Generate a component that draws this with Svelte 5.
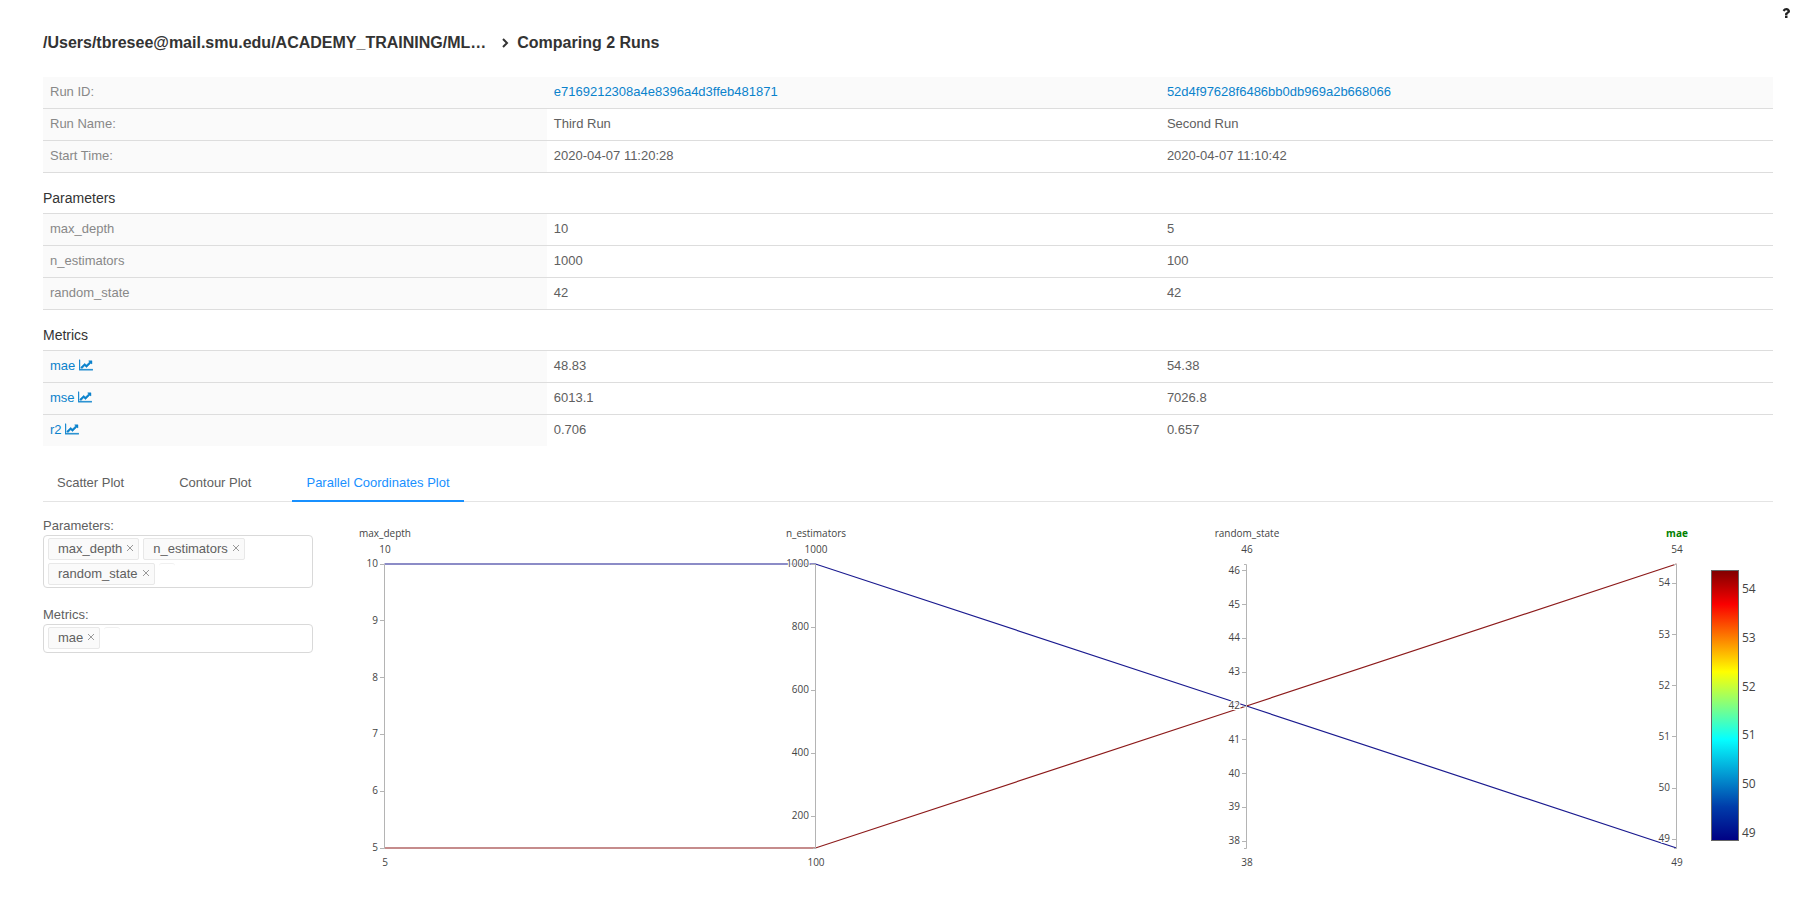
<script>
  const ids = ['e7169212308a4e8396a4d3ffeb481871', '52d4f97628f6486bb0db969a2b668066'];
  const info = [
    ['Run Name:', 'Third Run', 'Second Run'],
    ['Start Time:', '2020-04-07 11:20:28', '2020-04-07 11:10:42']
  ];
  const params = [
    ['max_depth', '10', '5'],
    ['n_estimators', '1000', '100'],
    ['random_state', '42', '42']
  ];
  const metrics = [
    ['mae', '48.83', '54.38'],
    ['mse', '6013.1', '7026.8'],
    ['r2', '0.706', '0.657']
  ];
  const tabs = ['Scatter Plot', 'Contour Plot', 'Parallel Coordinates Plot'];
  let active = $state(2);
  let selectedParams = $state(['max_depth', 'n_estimators', 'random_state']);
  let selectedMetrics = $state(['mae']);

  // Parallel coordinates geometry
  let width = $state(1445);
  const top = 48;
  const bottom = 332;
  const padLeft = 56;
  const padRight = 97;
  const axes = [
    { name: 'max_depth', min: 5, max: 10, hi: '10', lo: '5', ticks: [5, 6, 7, 8, 9, 10] },
    { name: 'n_estimators', min: 100, max: 1000, hi: '1000', lo: '100', ticks: [200, 400, 600, 800, 1000] },
    { name: 'random_state', min: 37.8, max: 46.2, hi: '46', lo: '38', ticks: [38, 39, 40, 41, 42, 43, 44, 45, 46] },
    { name: 'mae', min: 48.83, max: 54.38, hi: '54', lo: '49', ticks: [49, 50, 51, 52, 53, 54], metric: true }
  ];
  const runs = [
    { color: '#000083', values: [10, 1000, 42, 48.83] },
    { color: '#800000', values: [5, 100, 42, 54.38] }
  ];
  const barTop = 54;
  const barHeight = 270;
  const barTicks = [49, 50, 51, 52, 53, 54];
  const x = (i) => Math.ceil(padLeft + (i * (width - padLeft - padRight)) / 3);
  const y = (a, v) => bottom - ((v - a.min) / (a.max - a.min)) * (bottom - top);
  const snap = (n) => Math.floor(n) + 0.5;
  const barY = (v) => barTop + ((54.38 - v) / 5.55) * barHeight;
  const points = (r) => r.values.map((v, i) => `${x(i) + 0.5},${y(axes[i], v)}`).join(' ');
</script>

{#snippet chips(label, id, items, remove)}
  <div class="field">
    <label for={id}>{label}</label>
    <div class="select">
      {#each items as item}
        <span class="chip">{item}<button aria-label="Remove {item}" onclick={() => remove(item)}>
          <svg viewBox="0 0 8 8" width="8" height="8"><path d="M1 1l6 6M7 1l-6 6" /></svg>
        </button></span>
      {/each}
      <input {id} type="text" />
    </div>
  </div>
{/snippet}

{#snippet rows(list)}
  {#each list as [name, a, b]}
    <tr><th scope="row">{name}</th><td>{a}</td><td>{b}</td></tr>
  {/each}
{/snippet}

<div class="page">
  <header>
    <button class="help" aria-label="Help">
      <svg viewBox="0 0 1792 1792" width="14" height="14"><path d="M1088 1256v240q0 16-12 28t-28 12h-240q-16 0-28-12t-12-28v-240q0-16 12-28t28-12h240q16 0 28 12t12 28zm316-600q0 54-15.500 101t-35 76.500-55 59.500-57.500 43.500-61 35.500q-41 23-68.500 65t-27.500 67q0 17-12 32.500t-28 15.500h-240q-15 0-25.500-18.500t-10.500-37.500v-45q0-83 65-156.500t143-108.500q59-27 84-56t25-76q0-42-46.500-74t-107.500-32q-65 0-108 29-35 25-107 115-13 16-31 16-12 0-25-8l-164-125q-13-10-15.500-25t5.500-28q160-266 464-266 80 0 161 31t146 83 106 127.500 41 158.500z" /></svg>
    </button>
  </header>
  <main>
    <h1>
      <a href="#experiment">/Users/tbresee@mail.smu.edu/ACADEMY_TRAINING/ML…</a>
      <svg class="chevron" viewBox="0 0 8 12" width="8" height="12"><path d="M2 2l4 4-4 4" /></svg>
      <span>Comparing 2 Runs</span>
    </h1>

    <table>
      <thead>
        <tr>
          <th scope="row">Run ID:</th>
          {#each ids as id}<td><a href="#{id}">{id}</a></td>{/each}
        </tr>
      </thead>
      <tbody>{@render rows(info)}</tbody>
    </table>
    <h2>Parameters</h2>
    <table><tbody>{@render rows(params)}</tbody></table>
    <h2>Metrics</h2>
    <table>
      <tbody>
        {#each metrics as [name, a, b]}
          <tr>
            <th scope="row">
              <a class="metric" href="#{name}">{name}
                <svg viewBox="0 0 2048 1792" width="14" height="12"><path d="M2048 1536v128h-2048v-1536h128v1408h1920zm-128-1248v435q0 21-19.500 29.500t-35.500-7.500l-121-121-633 633q-10 10-23 10t-23-10l-233-233-416 416-192-192 585-585q10-10 23-10t23 10l233 233 464-464-121-121q-16-16-7.500-35.500t29.500-19.500h435q14 0 23 9t9 23z" /></svg>
              </a>
            </th>
            <td>{a}</td><td>{b}</td>
          </tr>
        {/each}
      </tbody>
    </table>

    <div class="tabs" role="tablist">
      {#each tabs as tab, i}
        <button role="tab" aria-selected={active === i} class:active={active === i} onclick={() => (active = i)}>{tab}</button>
      {/each}
    </div>

    <div class="panel">
      <div class="controls">
        {@render chips('Parameters:', 'params', selectedParams, (v) => (selectedParams = selectedParams.filter((p) => p !== v)))}
        {@render chips('Metrics:', 'metrics', selectedMetrics, (v) => (selectedMetrics = selectedMetrics.filter((p) => p !== v)))}
      </div>
      <div class="chart" bind:clientWidth={width}>
        <svg width="100%" height="360" role="img" aria-label="Parallel coordinates plot">
          <defs>
            <linearGradient id="jet" x1="0" y1="1" x2="0" y2="0">
              <stop offset="0" stop-color="#000083" />
              <stop offset="0.125" stop-color="#003caa" />
              <stop offset="0.375" stop-color="#05ffff" />
              <stop offset="0.625" stop-color="#ffff00" />
              <stop offset="0.875" stop-color="#fa0000" />
              <stop offset="1" stop-color="#800000" />
            </linearGradient>
          </defs>
          {#each runs as run}
            <polyline class="run" points={points(run)} stroke={run.color} />
          {/each}
          {#each axes as a, i}
            <text class="label" class:metric-title={a.metric} x={x(i) + 1} y="21" text-anchor="middle">{a.name}</text>
            <text class="label" x={x(i) + 1} y="37" text-anchor="middle">{a.hi}</text>
            <path class="axis" d="M{x(i) - 2} {top + 0.5}h2.500V{bottom + 0.5}h-2.500" />
            {#each a.ticks as t}
              <path class="axis" d="M{x(i) - 4} {snap(y(a, t))}h4" />
              <text class="label tick" x={x(i) - 6} y={Math.round(y(a, t)) + 3} text-anchor="end">{t}</text>
            {/each}
            <text class="label" x={x(i) + 1} y="350" text-anchor="middle">{a.lo}</text>
          {/each}
          <rect class="bar" x={width - 61.5} y={barTop + 0.5} width="27" height={barHeight} />
          {#each barTicks as t}
            <text class="bar-label" x={width - 31} y={Math.round(barY(t)) + 5}>{t}</text>
          {/each}
        </svg>
      </div>
    </div>
  </main>
</div>

<style>
  :global(body) { background: #fff; }
  .page { font: 13px/19px "Liberation Sans", Arial, sans-serif; color: #606060; padding-bottom: 24px; }
  a { color: #0a82cc; text-decoration: none; }
  button { font: inherit; color: inherit; background: none; border: 0; padding: 0; cursor: pointer; }
  header { display: flex; justify-content: flex-end; height: 28px; padding: 6px 14px 0 0; box-sizing: border-box; }
  .help { display: flex; height: 14px; }
  .help svg { fill: #222; }
  main { padding: 0 34px 0 43px; }
  h1 { display: flex; align-items: center; gap: 8px; margin: 0 0 20px; height: 29px; font-size: 16px; line-height: 29px; font-weight: 700; color: #333; }
  h1 a { color: #333; margin-right: 7px; }
  .chevron { fill: none; stroke: #333; stroke-width: 2; }
  table { width: 100%; table-layout: fixed; border-collapse: separate; border-spacing: 0; }
  th, td { box-sizing: border-box; height: 32px; padding: 0 7px 2px; text-align: left; font-weight: 400; border-top: 1px solid #ddd; width: 35.44%; }
  th { width: 29.12%; background: #fafafa; color: #888; }
  thead th, thead td { height: 31px; border-top: 0; background: #fafafa; }
  h2 { margin: 0; height: 41px; padding-top: 15px; box-sizing: border-box; font-size: 14px; line-height: 20px; font-weight: 400; color: #333; border-top: 1px solid #ddd; }
  .metric svg { fill: currentColor; stroke: currentColor; stroke-width: 60; vertical-align: -1px; }
  .tabs { display: flex; gap: 27px; margin-top: 19px; border-bottom: 1px solid #e4e4e4; }
  .tabs button { height: 37px; padding: 0 14px; margin-bottom: -1px; border-bottom: 2px solid transparent; }
  .tabs .active { color: #1890ff; border-color: #1890ff; }
  .panel { display: flex; gap: 15px; padding-top: 14px; }
  .controls { flex: 0 0 270px; }
  .field { margin-bottom: 17px; }
  label { display: block; }
  .select { display: flex; flex-wrap: wrap; align-items: flex-start; gap: 3px 4px; box-sizing: border-box; min-height: 29px; padding: 2px 4px; border: 1px solid #d9d9d9; border-radius: 4px; }
  .chip { display: inline-flex; align-items: center; gap: 4px; box-sizing: border-box; height: 22px; padding: 0 4px 2px 9px; border: 1px solid #e8e8e8; border-radius: 2px; background: #fafafa; }
  .chip button { display: flex; }
  .chip svg { fill: none; stroke: #999; }
  .select input { width: 16px; height: 22px; box-sizing: border-box; border: 0; padding: 0; border-top: 1px solid #f0f0f0; border-radius: 3px; outline: 0; font: inherit; background: none; }
  .chart { flex: 1; min-width: 0; }
  .chart svg { display: block; }
  .run { fill: none; stroke-opacity: 0.9; stroke-width: 1.2; }
  .axis { fill: none; stroke: #b4b4b4; }
  .label { font: 10px "Open Sans", Verdana, sans-serif; fill: #444; }
  .metric-title { font-weight: 700; fill: green; }
  .tick { paint-order: stroke; stroke: #fff; stroke-width: 2px; }
  .bar { fill: url(#jet); stroke: #666; }
  .bar-label { font: 12px "Open Sans", Verdana, sans-serif; fill: #444; }
</style>
